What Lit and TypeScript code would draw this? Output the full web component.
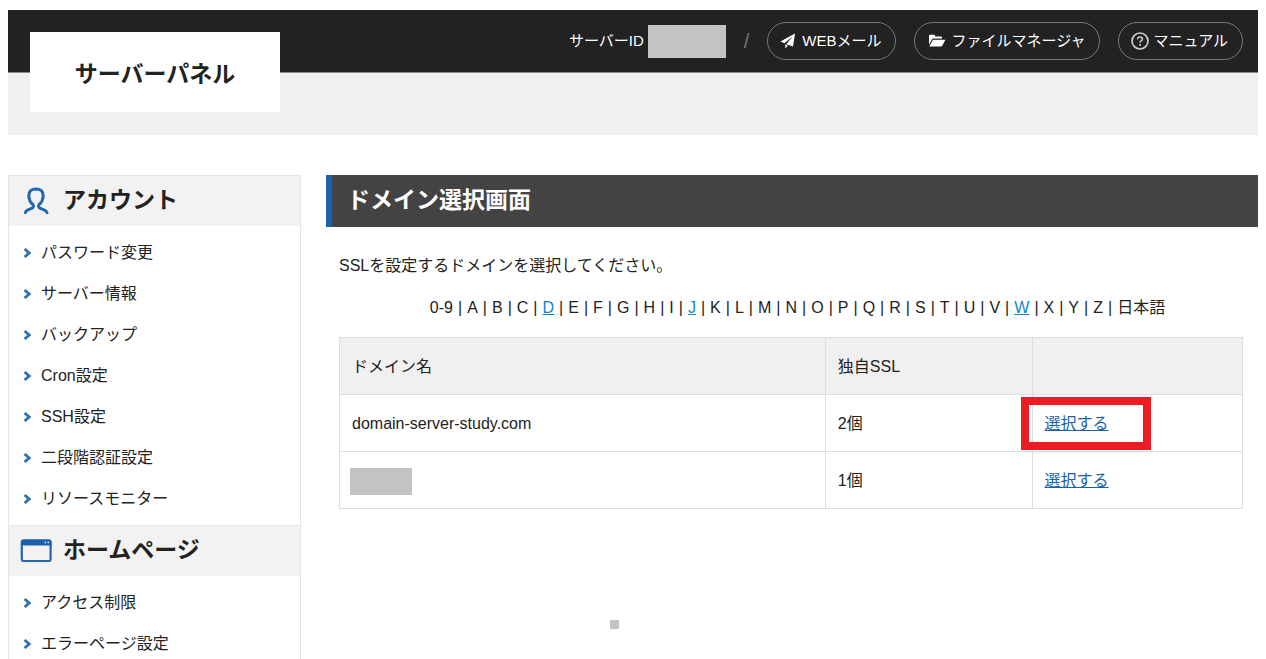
import { LitElement, html, css, svg } from "lit";
import { customElement } from "lit/decorators.js";

const planeIcon = svg`<path d="M15 0.5 L0.5 8.6 L4.3 10.3 L12.6 3.4 L6.3 11.2 L13 13.6 Z"/><path d="M5.2 11.3 L5.4 15.5 L7.8 12.5 Z"/>`;
const folderIcon = svg`<path d="M2 1.5 Q2 0.8 2.7 0.8 H7 Q7.8 0.8 8 1.6 V2.4 H14 Q15 2.4 15 3.4 V4.6 H6.8 Q5.6 4.6 5 5.6 L2 10.6 Z"/><path d="M6.9 5.7 H17.7 Q18.4 5.7 18 6.5 L15.4 11.6 Q14.9 12.6 13.8 12.6 H3 Q2.2 12.6 2.7 11.8 L5.6 6.6 Q6.1 5.7 6.9 5.7 Z"/>`;
const helpIcon = svg`<circle cx="9" cy="9" r="8" fill="none" stroke="#ccc" stroke-width="1.7"/><path d="M6.6 7.2 Q6.7 5 9 5 Q11.4 5 11.4 7 Q11.4 8.2 10.1 8.9 Q9.1 9.5 9.1 10.7" fill="none" stroke="#ccc" stroke-width="1.6"/><rect x="8.2" y="12" width="1.8" height="1.8" fill="#ccc"/>`;
const userIcon = html`<svg class="head-icon" width="32" height="28" viewBox="0 0 32 28" aria-hidden="true"><path d="M5.3 25.6 Q5.8 23.8 8 22.9 L11 21.7 Q13.8 20.6 13.4 18.6 Q13.1 17.4 11.4 16 Q9.6 14.2 9.4 11.6 Q8.6 10.4 8.9 8.4 Q8.8 2 16 1.9 Q23.2 2 23.1 8.4 Q23.4 10.4 22.6 11.6 Q22.4 14.2 20.6 16 Q18.9 17.4 18.6 18.6 Q18.2 20.6 21 21.7 L24 22.9 Q26.4 23.8 27 25.6" fill="none" stroke="#2467ae" stroke-width="3" stroke-linecap="round"/></svg>`;
const windowIcon = html`<svg class="head-icon" width="32" height="28" viewBox="0 0 32 28" aria-hidden="true"><rect x="1.8" y="3.6" width="28.8" height="20.4" rx="2" fill="none" stroke="#2467ae" stroke-width="2.2"/><path d="M1 8.6 V4.6 Q1 2.6 3 2.6 H29.4 Q31.4 2.6 31.4 4.6 V8.6 Z" fill="#1b60aa"/><circle cx="25.4" cy="5.4" r=".9" fill="#cfe0f2"/><circle cx="28.4" cy="5.4" r=".9" fill="#cfe0f2"/></svg>`;

const sections = [
  {
    title: "アカウント",
    icon: userIcon,
    items: ["パスワード変更", "サーバー情報", "バックアップ", "Cron設定", "SSH設定", "二段階認証設定", "リソースモニター"],
  },
  { title: "ホームページ", icon: windowIcon, items: ["アクセス制限", "エラーページ設定"] },
];

const indexKeys = ["0-9", ..."ABCDEFGHIJKLMNOPQRSTUVWXYZ", "日本語"];
const linkedKeys = ["D", "J", "W"];

@customElement("app-root")
export class AppRoot extends LitElement {
  static styles = css`
    :host {
      display: block;
      box-sizing: border-box;
      height: 100vh;
      overflow-y: auto;
      scrollbar-width: none;
      padding: 10px 8px 0;
      background: #fff;
      color: #222;
      font: 16px/24px "Liberation Sans", "Noto Sans CJK JP", sans-serif;
    }
    * { box-sizing: border-box; }
    h1, h2, p, ul { margin: 0; padding: 0; }
    ul { list-style: none; }
    .header {
      position: relative;
      background: #f0f0f0;
      padding-bottom: 62px;
    }
    .bar {
      display: flex;
      align-items: center;
      justify-content: flex-end;
      height: 63px;
      padding-right: 15px;
      background: #222;
      border-bottom: 1px solid #888;
      color: #fff;
      font-size: 15px;
    }
    .logo {
      position: absolute;
      left: 22px;
      top: 22px;
      width: 250px;
      height: 80px;
      display: flex;
      align-items: center;
      justify-content: center;
      background: #fff;
      color: #222;
      font: 700 23px/32px "Noto Sans CJK JP", sans-serif;
      text-decoration: none;
    }
    .mask { display: block; background: #c3c3c3; }
    .mask-id { width: 78px; height: 33px; margin-left: 4px; }
    .slash { margin: 0 18px; color: #777; font-size: 20px; }
    .tools { display: flex; gap: 18px; }
    .tool {
      display: flex;
      align-items: center;
      gap: 4px;
      height: 38px;
      padding: 0 14px 0 12px;
      border: 1px solid #777;
      border-radius: 19px;
      color: #fff;
      text-decoration: none;
    }
    .tool svg { fill: #fff; flex: none; }
    .body {
      display: grid;
      grid-template-columns: 293px minmax(0, 1fr);
      gap: 25px;
      align-items: start;
      margin-top: 40px;
    }
    .side { border: 1px solid #e5e5e5; border-top: 0; }
    .side-head {
      display: flex;
      align-items: center;
      gap: 11px;
      height: 51px;
      padding-left: 11px;
      border-top: 1px solid #e5e5e5;
      background: #f2f2f2;
      font-size: 23px;
      line-height: 32px;
    }
    .side-head span { padding-bottom: 2px; }
    .menu { padding: 6px 0; }
    .menu a {
      display: flex;
      align-items: center;
      gap: 9px;
      height: 41px;
      padding-left: 14px;
      color: #222;
      text-decoration: none;
    }
    .title {
      height: 52px;
      padding: 9px 15px;
      border-left: 6px solid #1b60aa;
      background: #434343;
      color: #fff;
      font-size: 23px;
      line-height: 32px;
    }
    .content { padding: 27px 15px 0 13px; }
    .index {
      display: flex;
      flex-wrap: wrap;
      justify-content: center;
      gap: 5px;
      margin: 18px 0 17px;
      padding-left: 13px;
    }
    .index a { color: #0d86d1; }
    table {
      width: 100%;
      border-collapse: collapse;
      table-layout: fixed;
    }
    .c-name { width: 53.8%; }
    .c-ssl { width: 22.9%; }
    th, td {
      position: relative;
      height: 57px;
      padding: 2px 12px 0;
      border: 1px solid #ddd;
      text-align: left;
      font-weight: 400;
    }
    th { background: #f0f0f0; }
    td a { color: #1b60aa; }
    .mask-name { width: 62px; height: 27px; margin-left: -2px; }
    .highlight {
      position: absolute;
      left: -12px;
      top: 2px;
      width: 130px;
      height: 53px;
      border: 8px solid #ed1c24;
      pointer-events: none;
    }
    .dot { width: 9px; height: 9px; margin: 111px 0 0 30.5%; }
  `;

  tool(label: string, icon: unknown, w: number, h: number) {
    return html`<a class="tool" href="#"><svg width=${w} height=${h} viewBox="0 0 ${w} ${h}" aria-hidden="true">${icon}</svg>${label}</a>`;
  }

  render() {
    return html`
      <header class="header">
        <div class="bar">
          <span>サーバーID</span><span class="mask mask-id"></span>
          <span class="slash">/</span>
          <nav class="tools">
            ${this.tool("WEBメール", planeIcon, 18, 16)}
            ${this.tool("ファイルマネージャ", folderIcon, 20, 14)}
            ${this.tool("マニュアル", helpIcon, 18, 18)}
          </nav>
        </div>
        <a class="logo" href="#">サーバーパネル</a>
      </header>
      <div class="body">
        <nav class="side">
          ${sections.map(
            (s) => html`
              <h2 class="side-head">${s.icon}<span>${s.title}</span></h2>
              <ul class="menu">
                ${s.items.map(
                  (t) => html`<li><a href="#"><svg width="9" height="10" viewBox="0 0 9 10" aria-hidden="true"><path d="M1.6 1 L6.2 5 L1.6 9" fill="none" stroke="#2f6fb3" stroke-width="2.8"/></svg>${t}</a></li>`
                )}
              </ul>
            `
          )}
        </nav>
        <main>
          <h1 class="title">ドメイン選択画面</h1>
          <div class="content">
            <p>SSLを設定するドメインを選択してください。</p>
            <div class="index">
              ${indexKeys.map(
                (k, i) => html`${i ? html`<span>|</span>` : ""}${linkedKeys.includes(k) ? html`<a href="#">${k}</a>` : html`<span>${k}</span>`}`
              )}
            </div>
            <table>
              <colgroup><col class="c-name" /><col class="c-ssl" /><col /></colgroup>
              <thead>
                <tr><th>ドメイン名</th><th>独自SSL</th><th></th></tr>
              </thead>
              <tbody>
                <tr>
                  <td>domain-server-study.com</td>
                  <td>2個</td>
                  <td><a href="#">選択する</a><span class="highlight"></span></td>
                </tr>
                <tr>
                  <td><span class="mask mask-name"></span></td>
                  <td>1個</td>
                  <td><a href="#">選択する</a></td>
                </tr>
              </tbody>
            </table>
          </div>
          <div class="mask dot"></div>
        </main>
      </div>
    `;
  }
}
